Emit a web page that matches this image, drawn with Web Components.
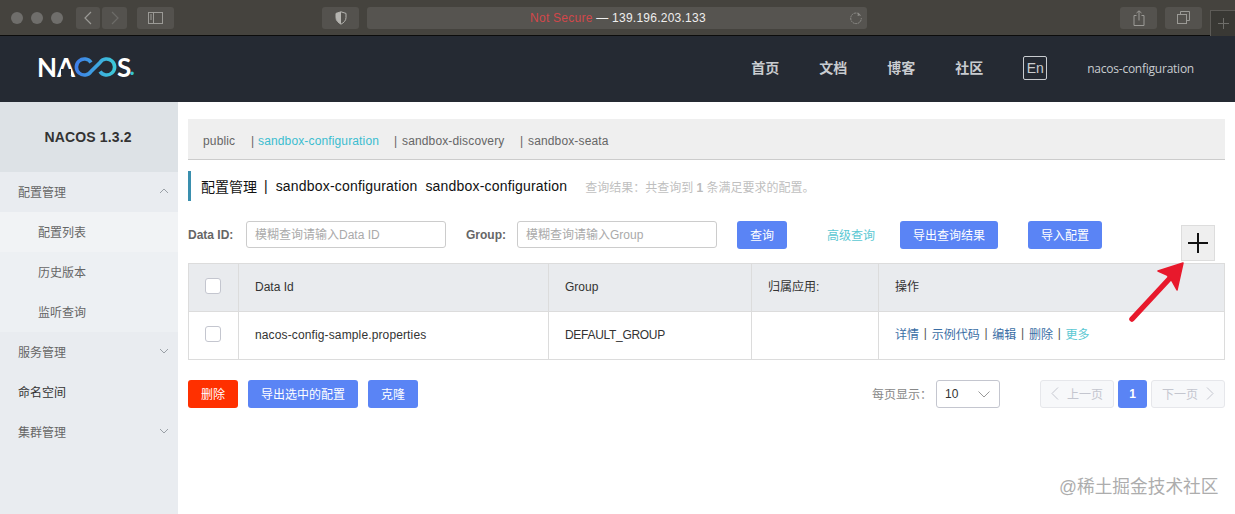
<!DOCTYPE html>
<html lang="zh"><head><meta charset="utf-8"><title>Nacos</title>
<style>
html,body{margin:0;height:514px;overflow:hidden;background:#fff}
body{font-family:"Liberation Sans","Noto Sans CJK SC",sans-serif;font-size:12px;color:#333}
</style></head><body>
<safari-bar></safari-bar>
<nacos-nav></nacos-nav>
<app-shell>
  <side-menu slot="side"></side-menu>
  <ns-bar></ns-bar>
  <page-title></page-title>
  <filter-row></filter-row>
  <config-table></config-table>
  <foot-bar></foot-bar>
</app-shell>
<plus-callout></plus-callout>
<water-mark>@稀土掘金技术社区</water-mark>
<script>
function def(name, css, html){
  customElements.define(name, class extends HTMLElement{
    constructor(){super();const s=this.attachShadow({mode:'open'});
      s.innerHTML='<style>'+css+'</style>'+html;}
  });
}
const chev=(d)=>`<svg width="10" height="6" viewBox="0 0 10 6" fill="none" stroke="#9aa0a6" stroke-width="1"><path d="${d?'M1 1l4 4 4-4':'M1 5l4-4 4 4'}"/></svg>`;

def('n-btn',`:host{display:inline-flex;align-items:center;justify-content:center;height:28px;box-sizing:border-box;padding:0 0 2px;background:var(--bg,#5a84f5);color:#fff;border-radius:3px;font-size:12px;white-space:nowrap}`,`<slot></slot>`);

def('safari-bar',`
:host{display:flex;align-items:center;height:35px;box-sizing:content-box;background:#45433e;border-bottom:1px solid #0c0c0c;position:relative}
.tl{display:flex;gap:8px;margin-left:11px}
.tl i{width:12px;height:12px;border-radius:50%;background:#6f6e6b}
.b{height:22px;background:#54524e;border-radius:3px;display:flex;align-items:center;justify-content:center}
.nav{display:flex;gap:2px;margin-left:13px}
.addr{width:500px;box-sizing:border-box;padding-left:2px;margin-left:8px;background:#565450;position:relative;font-size:12px;color:#eee;letter-spacing:.25px}
.addr em{font-style:normal;color:#d2474a}
.addr svg{position:absolute;right:4px;top:4px}
.tab{position:absolute;right:0;top:10px;width:24px;height:25px;border:1px solid #5d5b57;border-bottom:0;border-right:0;background:#393834;display:flex;align-items:center;justify-content:center}
`,`
<div class="tl"><i></i><i></i><i></i></div>
<div class="nav">
 <div class="b" style="width:24px"><svg width="10" height="14" viewBox="0 0 10 14" fill="none" stroke="#9b9a96" stroke-width="1.2"><path d="M8 1L2 7l6 6"/></svg></div>
 <div class="b" style="width:25px"><svg width="10" height="14" viewBox="0 0 10 14" fill="none" stroke="#6d6c68" stroke-width="1.2"><path d="M2 1l6 6-6 6"/></svg></div>
</div>
<div class="b" style="width:37px;margin-left:10px"><svg width="15" height="12" viewBox="0 0 15 12" fill="none" stroke="#9b9a96"><rect x=".5" y=".5" width="14" height="11"/><path d="M5.5 .5v11M2 3h2M2 5h2M2 7h2" stroke-width="1"/></svg></div>
<div class="b" style="width:37px;margin-left:148px"><svg width="12" height="14" viewBox="0 0 12 14"><path d="M6 .8l5 1.6v4.2c0 3-2.2 5-5 6.6-2.8-1.6-5-3.6-5-6.6V2.4z" fill="none" stroke="#b5b4b0"/><path d="M6 .8l-5 1.6v4.2c0 3 2.2 5 5 6.6z" fill="#b5b4b0"/></svg></div>
<div class="b addr"><span><em>Not Secure</em> — 139.196.203.133</span><svg width="14" height="14" viewBox="0 0 14 14" fill="none" stroke="#8d8c88"><path d="M11.5 4.5A5.3 5.3 0 1 0 12.3 7" stroke-dasharray="2 .6"/><path d="M9 1.5l2.7 2.8L8.6 5" fill="#8d8c88" stroke="none"/></svg></div>
<div class="b" style="width:37px;margin-left:253px"><svg width="12" height="16" viewBox="0 0 12 16" fill="none" stroke="#9b9a96"><path d="M3.500 5.500H1v10h10v-10H8.500M6 10.500V1M3.500 3L6 .8 8.500 3"/></svg></div>
<div class="b" style="width:37px;margin-left:8px"><svg width="13" height="13" viewBox="0 0 13 13" fill="none" stroke="#9b9a96"><rect x=".5" y="3.500" width="9" height="9"/><path d="M3.500 3.500V.5h9v9h-3"/></svg></div>
<div class="tab"><svg width="11" height="11" viewBox="0 0 11 11" stroke="#6f6e6a"><path d="M5.500 0v11M0 5.500h11"/></svg></div>
`);

def('nacos-nav',`
:host{display:flex;align-items:center;height:66px;background:#252a33;color:#c9ccd0;position:relative;padding-left:37px}
.logo{display:flex;align-items:center;height:20px;margin-bottom:5px;color:#fff;font:700 26px/20px Lato,"Liberation Sans",sans-serif;letter-spacing:0}
.a{position:relative;display:inline-block;margin-left:0}
.a::after{content:"";position:absolute;left:4px;right:4px;top:12px;height:6px;background:#252a33}
.logo svg{margin:0 -1px 0 -1px}
.dot{color:#35c4cf;font-size:22px;margin-left:-2px}
.links{margin-left:auto;display:flex;align-items:center;padding-right:41px}
.l{font-size:14px;font-weight:700;width:27px;margin-right:41px;white-space:nowrap;padding-bottom:4px}
.en{width:24px;height:24px;box-sizing:border-box;border:1px solid #c9ccd0;border-radius:2px;display:flex;align-items:center;justify-content:center;font-size:14px;margin-right:40px;margin-bottom:2px}
.u{font:12px/1 "Open Sans","Liberation Sans",sans-serif;letter-spacing:-.24px}
`,`
<div class="logo"><span>N</span><span class="a">A</span>
<svg width="44" height="20" viewBox="0 0 44 20" fill="none" stroke-width="3.6"><defs><linearGradient id="g" x1="0" x2="1"><stop offset="0" stop-color="#3f7fe8"/><stop offset="1" stop-color="#3cc8d8"/></linearGradient></defs><path stroke="url(#g)" d="M17 5.500A8 8 0 1 0 17 14.500L26 5.500A8 8 0 1 1 26 14.500"/></svg>
<span>S</span><span class="dot">.</span></div>
<div class="links"><span class="l">首页</span><span class="l">文档</span><span class="l">博客</span><span class="l">社区</span><span class="en">En</span><span class="u" style="margin-right:0;margin-left:0">nacos-configuration</span></div>
`);

def('app-shell',`
:host{display:flex;height:412px}
aside{width:178px;flex:none}
main{flex:1;min-width:0;padding:17px 10px 0}
`,`<aside><slot name="side"></slot></aside><main><slot></slot></main>`);

def('side-menu',`
:host{display:block;height:412px;background:#e9ecf0;color:#666}
h1{margin:0;height:70px;padding-right:2px;background:#dde2e6;color:#333;font:700 14px/70px "Liberation Sans",sans-serif;text-align:center;letter-spacing:.15px}
.i,.s{box-sizing:border-box;height:40px;display:flex;align-items:center;padding-bottom:2px}
.i{justify-content:space-between;padding-left:18px;padding-right:9px}
.s{padding-left:38px;background:#edf0f3}
.s.on{background:#f1f3f5}
.d{color:#333}
`,`<h1>NACOS 1.3.2</h1>
<div class="i">配置管理${chev(0)}</div>
<div class="s on">配置列表</div><div class="s">历史版本</div><div class="s">监听查询</div>
<div class="i">服务管理${chev(1)}</div>
<div class="i d">命名空间</div>
<div class="i">集群管理${chev(1)}</div>`);

def('ns-bar',`
:host{display:flex;align-items:center;height:41px;box-sizing:border-box;background:#efefef;border-bottom:1px solid #ccc;padding:3px 0 0 15px;font-size:12px;color:#666;letter-spacing:.14px}
.on{color:#3bbdd0}
span{white-space:nowrap}
`,`<span style="width:48px">public</span><span style="width:7px">|</span><span class="on" style="width:136px">sandbox-configuration</span><span style="width:8px">|</span><span style="width:118px">sandbox-discovery</span><span style="width:8px">|</span><span>sandbox-seata</span>`);

def('page-title',`
:host{display:flex;align-items:center;height:30px;margin-top:11px;border-left:3px solid #3a8fae;padding-left:10px;font-size:14px;color:#111;white-space:nowrap}
.m{margin:0 8px 0 7px}
.e{letter-spacing:.19px}
.t{margin-left:8px}
.r{margin-left:18px;font-size:12px;color:#bfbfbf}
b{color:#bbb}
`,`<span>配置管理</span><span class="m">|</span><span class="e">sandbox-configuration</span><span class="t e">sandbox-configuration</span><span class="r">查询结果：共查询到 <b>1</b> 条满足要求的配置。</span>`);

def('filter-row',`
:host{display:flex;align-items:center;height:28px;margin-top:20px;white-space:nowrap;font-size:12px}
label{font-weight:700;color:#666;padding-bottom:1px}
.in{box-sizing:border-box;width:200px;height:27px;margin-bottom:1px;border:1px solid #ccc;border-radius:3px;display:flex;align-items:center;padding:0 0 2px 8px;color:#aaa}
.link{color:#5bc8d3;padding-bottom:2px}
`,`<label style="width:58px">Data ID:</label><div class="in">模糊查询请输入Data ID</div>
<label style="width:51px;margin-left:20px">Group:</label><div class="in">模糊查询请输入Group</div>
<n-btn style="width:50px;margin-left:20px">查询</n-btn>
<span class="link" style="margin-left:40px">高级查询</span>
<n-btn style="width:98px;margin-left:25px">导出查询结果</n-btn>
<n-btn style="width:74px;margin-left:30px">导入配置</n-btn>`);

def('config-table',`
:host{display:grid;grid-template-columns:49px 310px 203px 127px 1fr;margin-top:14px;border:1px solid #dcdcdc;box-sizing:border-box;height:97px;grid-template-rows:48px 47px;color:#333;font-size:12px}
.c{display:flex;align-items:center;padding:0 0 5px 16px;border-left:1px solid #dcdcdc;white-space:nowrap}
.en{padding-bottom:1px}
.f{border-left:0;justify-content:center;padding:0 1px 3px 0}
.h{background:#e9ebee;border-bottom:1px solid #dcdcdc}
.cb{width:16px;height:16px;box-sizing:border-box;background:#fff;border:1px solid #c4c6cf;border-radius:3px}
.name{letter-spacing:.13px}
.grp{letter-spacing:-.3px}
.ops{color:#3a6ea5;gap:4.75px}
.ops u{text-decoration:none;color:#555}
.ops i{font-style:normal;color:#5bc8d3}
`,`<div class="c h f"><div class="cb"></div></div><div class="c h en">Data Id</div><div class="c h en">Group</div><div class="c h">归属应用:</div><div class="c h">操作</div>
<div class="c f"><div class="cb"></div></div><div class="c en name">nacos-config-sample.properties</div><div class="c en grp">DEFAULT_GROUP</div><div class="c"></div>
<div class="c ops">详情<u>|</u>示例代码<u>|</u>编辑<u>|</u>删除<u>|</u><i>更多</i></div>`);

def('foot-bar',`
:host{display:flex;align-items:center;height:28px;margin-top:20px;font-size:12px;white-space:nowrap}
.lab{margin-left:auto;color:#888;width:64px;padding-bottom:2px}
.sel{box-sizing:border-box;width:64px;height:28px;border:1px solid #c4c6cf;border-radius:3px;display:flex;align-items:center;justify-content:space-between;padding:0 9px 0 8px;color:#333}
.p{box-sizing:border-box;width:74px;height:28px;padding-bottom:2px;border:1px solid #e6e7eb;border-radius:3px;background:#f7f8fa;color:#c4c6cf;display:flex;align-items:center;justify-content:center;gap:8px}
.n{width:29px;height:28px;margin:0 4px;background:#5a84f5;color:#fff;border-radius:3px;display:flex;align-items:center;justify-content:center;font-weight:700}
`,`<n-btn style="--bg:#ff3000;width:50px">删除</n-btn>
<n-btn style="width:110px;margin-left:10px">导出选中的配置</n-btn>
<n-btn style="width:50px;margin-left:10px">克隆</n-btn>
<span class="lab">每页显示：</span>
<div class="sel">10<svg width="12" height="7" viewBox="0 0 12 7" fill="none" stroke="#999"><path d="M.5 .5L6 6l5.500-5.500"/></svg></div>
<div class="p" style="margin-left:40px"><svg width="8" height="13" viewBox="0 0 8 13" fill="none" stroke="#c4c6cf"><path d="M7 .5l-6 6 6 6"/></svg>上一页</div>
<div class="n">1</div>
<div class="p">下一页<svg width="8" height="13" viewBox="0 0 8 13" fill="none" stroke="#c4c6cf"><path d="M1 .5l6 6-6 6"/></svg></div>`);

def('plus-callout',`
:host{position:absolute;left:1125px;top:225px;width:100px;height:100px}
.p{position:absolute;left:56px;top:0;width:34px;height:36px;box-sizing:border-box;background:#efefef;border:1px solid #ddd;display:flex;align-items:center;justify-content:center}
svg.a{position:absolute;left:0;top:0;overflow:visible}
`,`<div class="p"><svg width="20" height="20" viewBox="0 0 20 20" stroke="#111" stroke-width="2"><path d="M10 0v20M0 10h20"/></svg></div>
<svg class="a" width="100" height="100" viewBox="0 0 100 100"><path d="M7 94L46 52" stroke="#e8192c" stroke-width="5.500" stroke-linecap="round"/><path d="M58 38L33 46L42 50L47 56L52 65Z" fill="#e8192c" stroke="#e8192c" stroke-width="1.500" stroke-linejoin="round"/></svg>`);

def('water-mark',`
:host{position:absolute;left:1059px;top:475px;font-size:17.7px;line-height:24px;color:#adadad;white-space:nowrap;text-shadow:0 0 1px #fff}
`,`<slot></slot>`);
</script>
</body></html>
